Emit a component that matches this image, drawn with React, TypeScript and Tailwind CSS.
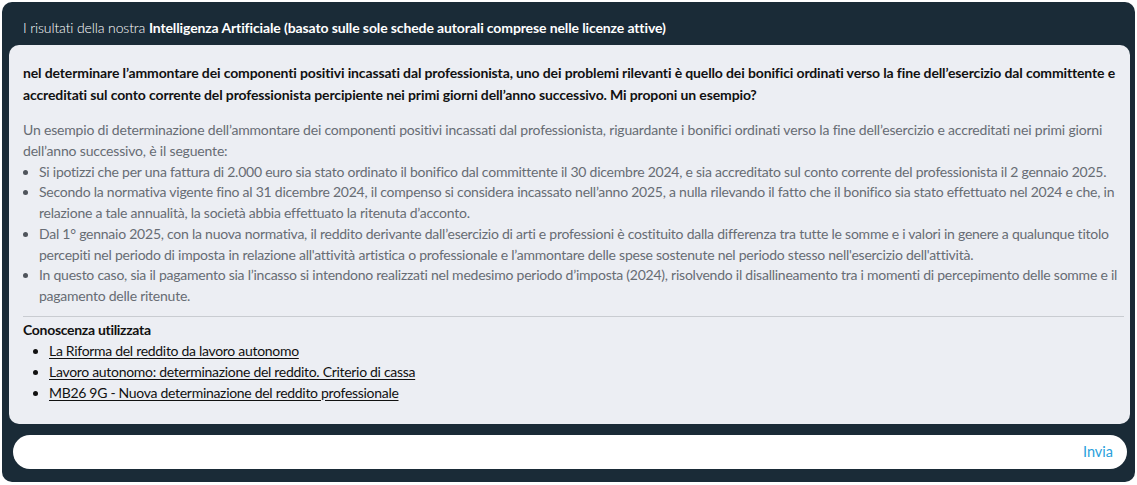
import React from "react";

const font = { fontFamily: "Lato, 'Noto Sans', sans-serif" };

function L({ children }: { children: React.ReactNode }) {
  return <span className="block whitespace-nowrap">{children}</span>;
}

export default function App() {
  return (
    <div className="w-[1137px] h-[485px] bg-white p-[2px]" style={font}>
      <div className="flex h-[480px] w-[1133px] flex-col rounded-[10px] bg-[#1a2b37] pl-[7px] pr-[5px]">
        <div className="flex h-[43px] items-center pl-[14px] pt-[8px] text-[14px] tracking-[-0.12px] text-white">
          <span className="font-light">I risultati della nostra&nbsp;</span>
          <span className="font-bold">Intelligenza Artificiale (basato sulle sole schede autorali comprese nelle licenze attive)</span>
        </div>
        <div className="flex h-[379px] flex-col rounded-[10px] bg-[#eceef3] px-[14px] pt-[17px]">
          <p className="text-[14px] font-bold leading-[22px] tracking-[-0.13px] text-[#111111]">
            <L>nel determinare l’ammontare dei componenti positivi incassati dal professionista, uno dei problemi rilevanti è quello dei bonifici ordinati verso la fine dell’esercizio dal committente e</L>
            <L>accreditati sul conto corrente del professionista percipiente nei primi giorni dell’anno successivo. Mi proponi un esempio?</L>
          </p>
          <div className="mt-[14px] text-[14px] leading-[20.75px] text-[#676c73]">
            <p className="tracking-[-0.18px]">
              <L>Un esempio di determinazione dell’ammontare dei componenti positivi incassati dal professionista, riguardante i bonifici ordinati verso la fine dell’esercizio e accreditati nei primi giorni</L>
              <L>dell’anno successivo, è il seguente:</L>
            </p>
            <ul className="list-disc pl-[16px] tracking-[-0.24px] marker:text-[#4f545b]">
              <li>
                <L>Si ipotizzi che per una fattura di 2.000 euro sia stato ordinato il bonifico dal committente il 30 dicembre 2024, e sia accreditato sul conto corrente del professionista il 2 gennaio 2025.</L>
              </li>
              <li>
                <L>Secondo la normativa vigente fino al 31 dicembre 2024, il compenso si considera incassato nell’anno 2025, a nulla rilevando il fatto che il bonifico sia stato effettuato nel 2024 e che, in</L>
                <L>relazione a tale annualità, la società abbia effettuato la ritenuta d’acconto.</L>
              </li>
              <li>
                <L>Dal 1° gennaio 2025, con la nuova normativa, il reddito derivante dall’esercizio di arti e professioni è costituito dalla differenza tra tutte le somme e i valori in genere a qualunque titolo</L>
                <L>percepiti nel periodo di imposta in relazione all'attività artistica o professionale e l’ammontare delle spese sostenute nel periodo stesso nell'esercizio dell'attività.</L>
              </li>
              <li>
                <L>In questo caso, sia il pagamento sia l’incasso si intendono realizzati nel medesimo periodo d’imposta (2024), risolvendo il disallineamento tra i momenti di percepimento delle somme e il</L>
                <L>pagamento delle ritenute.</L>
              </li>
            </ul>
          </div>
          <div className="mt-[9px] mr-[-8px] border-t border-[#c9ccd1]" />
          <div className="pt-[2px] text-[14px] leading-[21px] tracking-[-0.3px] text-[#111111]">
            <div className="font-bold">Conoscenza utilizzata</div>
            <ul className="list-disc pl-[26px]">
              <li className="leading-[21px]"><a href="#" className="underline underline-offset-2">La Riforma del reddito da lavoro autonomo</a></li>
              <li className="leading-[21px]"><a href="#" className="underline underline-offset-2">Lavoro autonomo: determinazione del reddito. Criterio di cassa</a></li>
              <li className="leading-[21px]"><a href="#" className="underline underline-offset-2">MB26 9G - Nuova determinazione del reddito professionale</a></li>
            </ul>
          </div>
        </div>
        <div className="mt-[11px] flex h-[34px] items-center justify-end rounded-full bg-white ml-[4px] mr-[3px] pr-[14px]">
          <button className="text-[14.5px] text-[#2a9fdc]">Invia</button>
        </div>
      </div>
    </div>
  );
}
